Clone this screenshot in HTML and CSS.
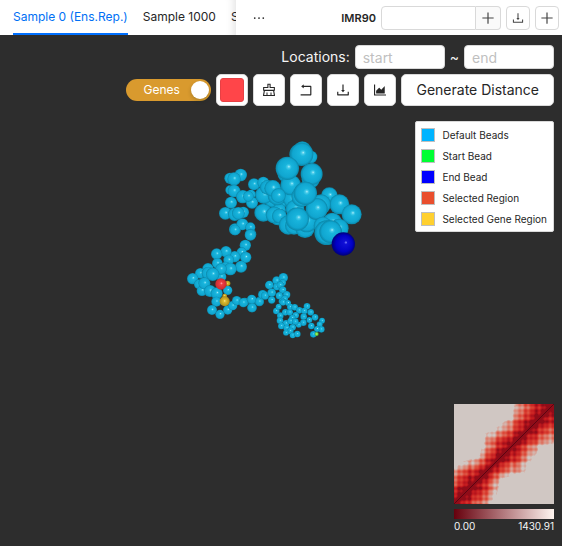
FILE: index.html
```html
<!DOCTYPE html>
<html lang="en">
<head>
<meta charset="utf-8">
<title>Chromatin viewer</title>
<link rel="stylesheet" href="styles.css">
</head>
<body>
<svg class="defs" aria-hidden="true">
  <defs>
    <radialGradient id="bead"><stop offset="0" stop-color="#b4effb"/><stop offset=".12" stop-color="#48cbe9"/><stop offset=".28" stop-color="#18b4dc"/><stop offset=".8" stop-color="#10a6d0"/><stop offset="1" stop-color="#0a86a8"/></radialGradient>
    <radialGradient id="end"><stop offset="0" stop-color="#8588ff"/><stop offset=".14" stop-color="#1010d6"/><stop offset=".7" stop-color="#0000c4"/><stop offset="1" stop-color="#000078"/></radialGradient>
    <radialGradient id="region"><stop offset="0" stop-color="#ffb0b0"/><stop offset=".25" stop-color="#f03c42"/><stop offset="1" stop-color="#c62c30"/></radialGradient>
    <radialGradient id="gene"><stop offset="0" stop-color="#fff0a0"/><stop offset=".25" stop-color="#dfbd30"/><stop offset="1" stop-color="#a98c1c"/></radialGradient>
    <radialGradient id="start"><stop offset="0" stop-color="#b0ff70"/><stop offset="1" stop-color="#45b52c"/></radialGradient>
    <symbol id="i-plus" viewBox="0 0 1024 1024"><path d="M482 152h60q8 0 8 8v704q0 8-8 8h-60q-8 0-8-8V160q0-8 8-8zM160 474h704q8 0 8 8v60q0 8-8 8H160q-8 0-8-8v-60q0-8 8-8z"/></symbol>
    <symbol id="i-download" viewBox="0 0 1024 1024"><path d="M505.7 661a8 8 0 0012.6 0l112-141.7c4.1-5.2.4-12.9-6.3-12.9h-74.1V168c0-4.4-3.6-8-8-8h-60c-4.4 0-8 3.6-8 8v338.3H400c-6.7 0-10.4 7.7-6.3 12.9l112 141.8zM878 626h-60c-4.4 0-8 3.6-8 8v154H214V634c0-4.4-3.6-8-8-8h-60c-4.4 0-8 3.6-8 8v198c0 17.7 14.3 32 32 32h684c17.7 0 32-14.3 32-32V634c0-4.4-3.6-8-8-8z"/></symbol>
    <symbol id="i-clear" viewBox="0 0 1024 1024"><path d="M899.1 869.6l-53-305.6H864c14.4 0 26-11.6 26-26V346c0-14.4-11.6-26-26-26H618V138c0-14.4-11.6-26-26-26H432c-14.4 0-26 11.6-26 26v182H160c-14.4 0-26 11.6-26 26v192c0 14.4 11.6 26 26 26h17.9l-53 305.6a25.95 25.95 0 0025.6 30.4h723c1.5 0 3-.1 4.4-.4a25.88 25.88 0 0021.2-30zM204 390h272V182h72v208h272v104H204V390zm468 440V674c0-4.4-3.6-8-8-8h-48c-4.4 0-8 3.6-8 8v156H416V674c0-4.4-3.6-8-8-8h-48c-4.4 0-8 3.6-8 8v156H202.8l45.1-260H776l45.1 260H672z"/></symbol>
    <symbol id="i-rollback" viewBox="0 0 1024 1024"><path d="M793 242H366v-74c0-6.7-7.7-10.4-12.9-6.3l-142 112a8 8 0 000 12.6l142 112c5.2 4.1 12.9.4 12.9-6.3v-74h415v470H175c-4.4 0-8 3.6-8 8v60c0 4.4 3.6 8 8 8h618c35.3 0 64-28.7 64-64V306c0-35.3-28.7-64-64-64z"/></symbol>
    <symbol id="i-area" viewBox="0 0 1024 1024"><path d="M888 792H200V168c0-4.4-3.6-8-8-8h-56c-4.4 0-8 3.6-8 8v688c0 4.4 3.6 8 8 8h752c4.4 0 8-3.6 8-8v-56c0-4.4-3.6-8-8-8zm-616-64h536c4.4 0 8-3.6 8-8V284c0-7.2-8.7-10.7-13.7-5.7L592 488.6l-125.4-124a8.03 8.03 0 00-11.3 0l-189 189.6a7.87 7.87 0 00-2.3 5.6V720c0 4.4 3.6 8 8 8z"/></symbol>
    <symbol id="i-more" viewBox="0 0 1024 1024"><circle cx="200" cy="512" r="64"/><circle cx="512" cy="512" r="64"/><circle cx="824" cy="512" r="64"/></symbol>
  </defs>
</svg>

<header class="topbar">
  <nav class="tabs">
    <a class="tab active" href="#s0">Sample 0 (Ens.Rep.)</a>
    <a class="tab" href="#s1000">Sample 1000</a>
    <a class="tab" href="#s2000">Sample 2000</a>
  </nav>
  <button class="more" type="button" aria-label="More samples"><svg class="icon"><use href="#i-more"/></svg></button>
  <div class="tools">
    <label class="cell" for="sample">IMR90</label>
    <div class="group">
      <input class="sample" id="sample" type="text">
      <button class="addon" type="button" aria-label="Add sample"><svg class="icon"><use href="#i-plus"/></svg></button>
    </div>
    <button class="small" type="button" aria-label="Download"><svg class="icon light"><use href="#i-download"/></svg></button>
    <button class="small" type="button" aria-label="Add view"><svg class="icon"><use href="#i-plus"/></svg></button>
  </div>
</header>

<main class="viewer">
  <svg class="scene" id="scene" role="img" aria-label="Chromatin bead chain"></svg>
  <div class="overlay">
    <div class="row locations">
      <label for="start-loc">Locations:</label>
      <input class="loc" id="start-loc" type="text" placeholder="start">
      <label for="end-loc">~</label>
      <input class="loc" id="end-loc" type="text" placeholder="end">
    </div>
    <div class="row">
      <button class="switch" type="button" role="switch" aria-checked="true"><span>Genes</span><span class="knob"></span></button>
      <button class="btn square" type="button" aria-label="Color"><span class="color"></span></button>
      <button class="btn square" type="button" aria-label="Clear"><svg class="icon"><use href="#i-clear"/></svg></button>
      <button class="btn square" type="button" aria-label="Rollback"><svg class="icon"><use href="#i-rollback"/></svg></button>
      <button class="btn square" type="button" aria-label="Download view"><svg class="icon"><use href="#i-download"/></svg></button>
      <button class="btn square" type="button" aria-label="Chart"><svg class="icon"><use href="#i-area"/></svg></button>
      <button class="btn wide" type="button">Generate Distance</button>
    </div>
    <ul class="legend">
      <li><span class="swatch default"></span>Default Beads</li>
      <li><span class="swatch first"></span>Start Bead</li>
      <li><span class="swatch last"></span>End Bead</li>
      <li><span class="swatch selected"></span>Selected Region</li>
      <li><span class="swatch genes"></span>Selected Gene Region</li>
    </ul>
    <figure class="map">
      <canvas id="heat" width="100" height="100"></canvas>
      <div class="scale"></div>
      <figcaption><span>0.00</span><span>1430.91</span></figcaption>
    </figure>
  </div>
</main>
<script src="app.js"></script>
</body>
</html>
```
FILE: styles.css
```css
* { box-sizing: border-box; }
body {
  margin: 0;
  min-height: 100vh;
  display: flex;
  flex-direction: column;
  background: #2d2d2d;
  color: #262626;
  font: 12px/20px Inter, "Liberation Sans", sans-serif;
}
button, input { font: inherit; color: inherit; margin: 0; padding: 0; }
.defs { width: 0; height: 0; position: absolute; }
.icon { width: 16px; height: 16px; fill: currentColor; display: block; }

.topbar { display: flex; height: 35px; background: #fff; }
.tabs {
  flex: 0 0 42%;
  min-width: 0;
  display: flex;
  gap: 15px;
  padding-left: 13px;
  overflow: hidden;
  box-shadow: inset -10px 0 8px -8px #0000001f;
}
.tab {
  flex: none;
  line-height: 33px;
  height: 35px;
  color: #262626;
  text-decoration: none;
}
.tab.active { color: #0070f5; border-bottom: 2px solid #0070ff; }
.more { width: 46px; border: 0; background: #fff; display: grid; place-items: center; }
.more .icon { width: 14px; height: 14px; }
.tools { flex: 1; display: flex; justify-content: flex-end; align-items: center; gap: 5px; padding-right: 3px; }
.cell { font-size: 11px; font-weight: 600; }
.group { display: flex; }
.sample { width: 95px; height: 24px; border: 1px solid #d9d9d9; border-radius: 4px 0 0 4px; background: #fff; }
.addon, .small { width: 24px; height: 24px; border: 1px solid #d9d9d9; display: grid; place-items: center; background: #fff; border-radius: 4px; }
.addon { width: 25px; background: #fafafa; border-left: 0; border-radius: 0 4px 4px 0; }
.small .icon, .addon .icon { color: #444; }
.small .icon.light { width: 14px; height: 14px; }

.viewer { flex: 1; display: grid; overflow: hidden; }
.scene, .overlay { grid-area: 1 / 1; }
.scene { width: 100%; height: 100%; }
.overlay {
  z-index: 1;
  display: flex;
  flex-direction: column;
  align-items: flex-end;
  padding: 10px 8px 13px;
}
.row { display: flex; align-items: center; gap: 5px; font-size: 14px; margin-bottom: 5px; }
.locations { color: #f5f5f5; }
.loc { width: 90px; height: 24px; padding: 0 7px; border: 1px solid #d9d9d9; border-radius: 4px; background: #fff; color: #262626; }
.loc::placeholder { color: #bfbfbf; opacity: 1; }
.btn { height: 32px; border: 1px solid #d9d9d9; border-radius: 5px; background: #fff; }
.square { width: 32px; display: grid; place-items: center; }
.wide { padding: 0 14px; }
.color { width: 24px; height: 24px; border-radius: 3px; background: #ff4549; border: 1px solid #e84044; }
.switch {
  width: 85px;
  height: 22px;
  padding: 0 2px 0 17px;
  display: flex;
  align-items: center;
  justify-content: space-between;
  border: 0;
  border-radius: 11px;
  background: #d99a2e;
  color: #fff;
  font-size: 12px;
}
.knob { width: 18px; height: 18px; border-radius: 50%; background: #fff; box-shadow: 0 2px 4px #00230b33; }
.legend {
  list-style: none;
  margin: 10px 0 0;
  padding: 2px 6px 2px 5px;
  background: #fff;
  border: 1px solid #d9d9d9;
  border-radius: 2px;
  font-size: 10px;
}
.legend li { display: flex; align-items: center; gap: 7px; height: 21px; }
.swatch { width: 14px; height: 14px; border: 1px solid #bfbfbf; }
.default { background: #00b4ff; }
.first { background: #00ff33; }
.last { background: #0000ff; }
.selected { background: #e94f2e; }
.genes { background: #ffd02f; }
.map { margin: auto 0 0; width: 100px; }
.map canvas { display: block; }
.scale { height: 10px; margin-top: 5px; background: linear-gradient(90deg, #67000d, #fff5f0); }
figcaption { display: flex; justify-content: space-between; color: #f5f5f5; font-size: 10px; line-height: 14px; }
```
FILE: app.js
```js
// Bead clusters: origin in thirds of a pixel, then [x, y, radius] back to front.
const clusters = [
  { at: [540, 300], beads: [
    [150,130,17],[182,120,19],[162,132,20],[150,165,14],[162,168,19],[188,185,20],[213,178,14],[222,148,18],[250,143,18],[280,155,12],[216,203,18],[153,203,18],[136,235,19],[164,238,20],[190,232,17],[175,235,19],[165,283,18],[187,268,18],[211,277,15],[295,205,25],[212,298,17],[275,195,22],[298,225,20],[205,184,16],[252,180,27],[292,182,29],[250,233,27],[294,245,26]
  ]},
  { at: [810, 300], beads: [
    [-8,157,22],[8,160,25],[97,45,26],[123,66,19],[90,58,32],[122,133,27],[50,115,28],[65,192,26],[62,150,31],[75,222,28],[25,182,22],[12,240,25],[28,243,22],[55,270,29],[72,272,27],[105,280,29],[110,260,32],[95,58,35],[125,117,33],[52,100,35],[95,185,31],[178,182,25],[208,208,30],[245,238,30],[187,262,29],[207,280,29],[153,208,30],[140,222,33],[106,175,35],[82,252,35],[158,272,27],[170,293,37],[182,290,34]
  ]},
  { at: [540, 585], beads: [
    [165,0,16],[211,15,17],[196,46,17],[185,67,15],[164,80,17],[138,65,17],[110,72,17],[197,82,17],[146,90,16],[112,100,16],[183,110,18],[137,113,18],[151,117,19],[84,116,17],[61,130,16],[38,146,17],[124,140,15],[123,117,17],[57,163,15],[66,182,16],[85,130,20],[98,133,20],[73,160,18],[90,183,18],[110,190,18],[143,181,14],[109,215,15],[96,240,15],[120,253,14],[143,240,14],[158,227,14],[170,212,14],[194,216,13],[216,210,14],[216,233,14],[238,215,14]
  ]},
  { at: [720, 675], beads: [
    [10,128,14],[35,118,14],[36,143,14],[58,125,13],[68,104,14],[88,75,13],[110,62,13],[130,53,14],[128,68,10],[75,107,12],[95,98,13],[95,120,11],[110,80,11],[121,75,11],[128,90,11],[118,107,11],[140,104,11],[134,116,10],[126,124,10],[109,153,10],[116,140,9],[129,127,10],[144,129,9],[121,167,10],[136,157,10],[151,141,10],[164,142,10],[178,151,10],[201,139,10],[193,153,10],[212,157,10],[191,170,10],[208,180,9],[225,172,10],[246,182,9],[239,193,9],[214,198,10],[244,208,10],[231,207,9],[220,223,10],[190,188,10],[176,194,9],[149,157,10],[167,166,10],[157,174,10],[120,182,10],[138,190,10],[152,183,10],[166,185,10],[124,198,10],[140,204,10],[158,202,10],[151,213,10],[138,218,9],[158,226,9],[172,222,10]
  ]}
];
// Highlighted beads: page position in thirds, radius, gradient.
const marked = [
  [683, 745, 8, "gene"], [663, 747, 17, "region"], [674, 783, 7, "gene"], [674, 799, 15, "gene"],
  [950, 897, 6, "start"], [1030, 627, 35, "end"]
];

const scene = document.getElementById("scene");
const ns = "http://www.w3.org/2000/svg";
function bead(x, y, r, kind) {
  const c = document.createElementNS(ns, "circle");
  c.setAttribute("cx", x / 3);
  c.setAttribute("cy", y / 3);
  c.setAttribute("r", r / 3);
  c.setAttribute("fill", `url(#${kind})`);
  scene.appendChild(c);
}
const light = { bead: [0.57, 0.42], end: [0.62, 0.43], region: [0.55, 0.43], gene: [0.5, 0.45], start: [0.5, 0.5] };
for (const [id, [fx, fy]] of Object.entries(light)) {
  const g = document.getElementById(id);
  g.setAttribute("fx", fx);
  g.setAttribute("fy", fy);
}
for (const { at, beads } of clusters) {
  for (const [x, y, r] of beads) bead(x + at[0], y + at[1], r, "bead");
}
for (const [x, y, r, kind] of marked) bead(x, y, r, kind);

// Contact map: three domains along the diagonal with a plaid texture.
const ctx = document.getElementById("heat").getContext("2d");
const stops = [[0,[90,5,18]],[0.12,[155,13,25]],[0.3,[196,26,30]],[0.55,[220,68,52]],[0.8,[221,132,115]],[1.08,[208,199,195]]];
function colour(t) {
  let k = 1;
  while (k < stops.length - 1 && stops[k][0] < t) k++;
  const [a, ca] = stops[k - 1], [b, cb] = stops[k];
  const f = Math.min(1, Math.max(0, (t - a) / (b - a)));
  return ca.map((v, n) => Math.round(v + (cb[n] - v) * f));
}
const reach = [[0,38],[15,39],[25,30],[36,20],[44,28],[50,35],[60,30],[70,28],[82,37],[100,38]];
function width(s) {
  let k = 1;
  while (reach[k][0] < s) k++;
  const [a, wa] = reach[k - 1], [b, wb] = reach[k];
  return wa + (wb - wa) * (s - a) / (b - a);
}
const stripe = i => 0.7 * Math.sin(i * 1.13) + 0.5 * Math.sin(i * 0.67 + 1) + 0.4 * Math.sin(i * 0.37);
for (let y = 0; y < 100; y++) {
  for (let x = 0; x < 100; x++) {
    const j = 99 - y, d = Math.abs(x - j);
    const u = d / width((x + j) / 2);
    let t = Math.pow(u, 1.05) + 0.11 * (stripe(x) + stripe(j)) * Math.min(1, d / 6);
    t = d < 1 ? 0 : Math.max(0.1, t);
    if (u > 1) t = Math.max(t, 0.8 + (u - 1) * 2);
    ctx.fillStyle = `rgb(${colour(t)})`;
    ctx.fillRect(x, y, 1, 1);
  }
}
```
